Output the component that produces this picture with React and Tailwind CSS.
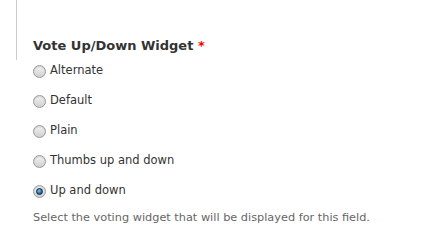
import React from 'react'

const options = ['Alternate', 'Default', 'Plain', 'Thumbs up and down', 'Up and down']

const Radio = ({ checked }) => (
  <span className="relative inline-block w-[13px] h-[13px] rounded-full border border-[#9a9a9a] bg-gradient-to-b from-[#f4f4f4] to-[#cfcfcf] shadow-[inset_0_1px_1px_rgba(0,0,0,0.15)] shrink-0">
    {checked && (
      <span className="absolute left-[2px] top-[2px] w-[7px] h-[7px] rounded-full bg-[radial-gradient(circle_at_40%_35%,#7ac3f0,#1a6fb0_60%,#0c3f6e)] border border-[#123]"></span>
    )}
  </span>
)

const App = () => {
  return (
    <div className="w-[448px] h-[242px] bg-white overflow-hidden font-['DejaVu_Sans',sans-serif] text-[#333]">
      <div className="ml-4 h-[60px] border-l border-[#ccc] overflow-hidden">
        <div className="-mt-[14px] ml-[70px] text-[12px] leading-[14px] text-[#0074bd]">Drupal app</div>
      </div>
      <div className="pl-[33px] -mt-[22px]">
        <div className="text-[13px] font-bold leading-[16px] h-[18px]">
          Vote Up/Down Widget <span className="text-[#f00]">*</span>
        </div>
        <div className="flex flex-col">
          {options.map((o, i) => (
            <label key={o} className="flex items-center gap-[4px] h-[30px] text-[11.5px]">
              <Radio checked={i === 4} />
              <span>{o}</span>
            </label>
          ))}
        </div>
        <div className="mt-[4px] text-[11.3px] text-[#666]">
          Select the voting widget that will be displayed for this field.
        </div>
      </div>
    </div>
  )
}

export default App
